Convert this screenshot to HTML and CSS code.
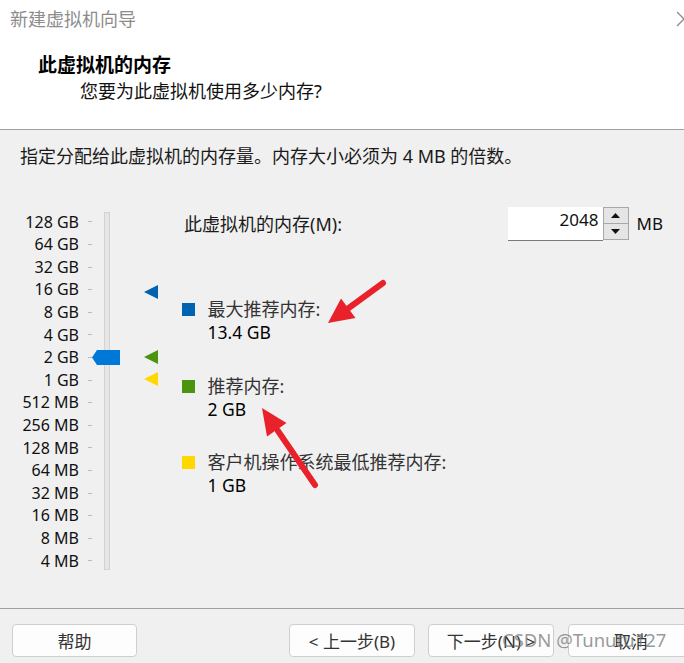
FILE: index.html
```html
<!DOCTYPE html>
<html lang="zh-CN">
<head>
<meta charset="utf-8">
<title>新建虚拟机向导</title>
<link rel="stylesheet" href="styles.css">
</head>
<body>
<div class="window">
  <div class="titlebar">
    <span class="title">新建虚拟机向导</span>
    <svg class="chev" width="10" height="36" viewBox="0 0 10 36"><polyline points="3,12 10,19 3,26" fill="none" stroke="#8a8a8a" stroke-width="1.3"/></svg>
  </div>
  <div class="header">
    <div class="h1">此虚拟机的内存</div>
    <div class="h2">您要为此虚拟机使用多少内存?</div>
  </div>
  <div class="content">
    <p class="desc">指定分配给此虚拟机的内存量。内存大小必须为 4 MB 的倍数。</p>
    <div class="main">
      <div class="slider">
        <div class="scale">
          <span class="lbl">128 GB</span><span class="tick"></span>
          <span class="lbl">64 GB</span><span class="tick"></span>
          <span class="lbl">32 GB</span><span class="tick"></span>
          <span class="lbl">16 GB</span><span class="tick"></span>
          <span class="lbl">8 GB</span><span class="tick"></span>
          <span class="lbl">4 GB</span><span class="tick"></span>
          <span class="lbl">2 GB</span><span class="tick"></span>
          <span class="lbl">1 GB</span><span class="tick"></span>
          <span class="lbl">512 MB</span><span class="tick"></span>
          <span class="lbl">256 MB</span><span class="tick"></span>
          <span class="lbl">128 MB</span><span class="tick"></span>
          <span class="lbl">64 MB</span><span class="tick"></span>
          <span class="lbl">32 MB</span><span class="tick"></span>
          <span class="lbl">16 MB</span><span class="tick"></span>
          <span class="lbl">8 MB</span><span class="tick"></span>
          <span class="lbl">4 MB</span><span class="tick"></span>
        </div>
        <div class="track"></div>
        <svg class="thumb" width="28" height="15" viewBox="0 0 28 15"><polygon points="5,0 28,0 28,15 5,15 0,7.5" fill="#0078d7"/></svg>
        <svg class="mk mk-max" width="14" height="14" viewBox="0 0 14 14"><polygon points="0,7 14,0 14,14" fill="#0063b1"/></svg>
        <svg class="mk mk-rec" width="14" height="14" viewBox="0 0 14 14"><polygon points="0,7 14,0 14,14" fill="#4a9410"/></svg>
        <svg class="mk mk-min" width="14" height="14" viewBox="0 0 14 14"><polygon points="0,7 14,0 14,14" fill="#ffd800"/></svg>
      </div>
      <div class="panel">
        <div class="memrow">
          <span class="memlbl">此虚拟机的内存(M):</span>
          <div class="spin">
            <div class="spin-input">2048</div>
            <div class="spin-btns">
              <div class="spin-btn up"><svg width="9" height="5" viewBox="0 0 9 5"><polygon points="0,5 9,5 4.5,0" fill="#111"/></svg></div>
              <div class="spin-btn"><svg width="9" height="5" viewBox="0 0 9 5"><polygon points="0,0 9,0 4.5,5" fill="#111"/></svg></div>
            </div>
          </div>
          <span class="unit">MB</span>
        </div>
        <div class="legend">
          <div class="item">
            <span class="sq sq-max"></span><span class="ilbl">最大推荐内存:</span>
            <span class="ival">13.4 GB</span>
          </div>
          <div class="item">
            <span class="sq sq-rec"></span><span class="ilbl">推荐内存:</span>
            <span class="ival">2 GB</span>
          </div>
          <div class="item">
            <span class="sq sq-min"></span><span class="ilbl">客户机操作系统最低推荐内存:</span>
            <span class="ival">1 GB</span>
          </div>
        </div>
      </div>
    </div>
  </div>
  <div class="footer">
    <div class="btn help">帮助</div>
    <div class="btn prev">&lt; 上一步(B)</div>
    <div class="btn next">下一步(N) &gt;</div>
    <div class="btn cancel">取消</div>
  </div>
  <svg class="arrows" width="684" height="663" viewBox="0 0 684 663">
    <line x1="383" y1="283" x2="346" y2="310" stroke="#e8212b" stroke-width="6" stroke-linecap="round"/>
    <polygon points="328,323 355.5,318 341,298.5" fill="#e8212b"/>
    <line x1="315" y1="485" x2="278" y2="431" stroke="#e8212b" stroke-width="6" stroke-linecap="round"/>
    <polygon points="262,408 286.5,423 267,436.5" fill="#e8212b"/>
  </svg>
  <div class="watermark">CSDN @Tunutu127</div>
</div>
</body>
</html>
```

FILE: styles.css
```css
* { box-sizing: border-box; }
html, body { margin: 0; padding: 0; }
body {
  width: 684px;
  height: 663px;
  overflow: hidden;
  background: #f0f0f0;
  color: #1a1a1a;
  font-family: "Noto Sans", "Noto Sans CJK SC", sans-serif;
}
.window {
  position: relative;
  height: 663px;
  display: flex;
  flex-direction: column;
}
.titlebar {
  height: 36px;
  flex-shrink: 0;
  background: #fff;
  display: flex;
  align-items: center;
  padding-left: 10px;
}
.title {
  font-family: "Noto Sans CJK SC", sans-serif;
  font-size: 18px;
  line-height: 24px;
  color: #8c8c8c;
}
.chev { margin-left: auto; display: block; }
.header {
  height: 94px;
  flex-shrink: 0;
  background: #fff;
  border-bottom: 1px solid #a0a0a0;
  padding-top: 16px;
}
.h1 {
  font-family: "Noto Sans CJK SC", sans-serif;
  font-weight: 700;
  font-size: 19px;
  line-height: 24px;
  padding-left: 38px;
  color: #000;
}
.h2 {
  font-size: 18px;
  line-height: 24px;
  margin-top: 3px;
  padding-left: 80px;
  color: #111;
}
.content {
  flex: 1;
  padding-top: 14px;
}
.desc {
  margin: 0;
  padding-left: 20px;
  font-size: 18px;
  line-height: 24px;
  color: #1a1a1a;
}
.main {
  display: flex;
  margin-top: 39px;
}
.slider {
  position: relative;
  width: 182px;
  flex-shrink: 0;
  display: flex;
  align-items: flex-start;
}
.scale {
  padding-top: 3.7px;
  display: grid;
  grid-template-columns: 79px 4px;
  column-gap: 9px;
  grid-auto-rows: 22.6px;
  align-items: center;
}
.lbl {
  text-align: right;
  font-size: 16px;
  line-height: 22.6px;
  white-space: nowrap;
  color: #111;
}
.tick {
  height: 1px;
  background: #b9b9b9;
}
.track {
  margin-left: 12px;
  margin-top: 5px;
  width: 6px;
  height: 358px;
  border: 1px solid #d2d2d2;
  background: #e6e6e6;
}
.thumb { position: absolute; left: 92px; top: 142.5px; }
.mk { position: absolute; left: 144px; }
.mk-max { top: 78px; }
.mk-rec { top: 142.5px; }
.mk-min { top: 165px; }
.panel {
  flex: 1;
  padding-right: 21px;
}
.memrow {
  display: flex;
  align-items: center;
  height: 34px;
}
.memlbl {
  margin-left: 2px;
  font-size: 18px;
  line-height: 24px;
  color: #1a1a1a;
}
.spin {
  margin-left: auto;
  display: flex;
  height: 34px;
}
.spin-input {
  width: 95px;
  height: 34px;
  background: #fff;
  border-bottom: 1px solid #7a7a7a;
  text-align: right;
  padding-right: 4px;
  font-size: 17px;
  line-height: 26px;
  color: #111;
}
.spin-btns {
  width: 26px;
  height: 33px;
  display: flex;
  flex-direction: column;
  border: 1px solid #a8a8a8;
  background: #e5e5e5;
}
.spin-btn {
  flex: 1;
  display: flex;
  align-items: center;
  justify-content: center;
}
.spin-btn svg { display: block; }
.spin-btn.up { border-bottom: 1px solid #a8a8a8; }
.unit {
  margin-left: 8px;
  font-size: 17px;
  line-height: 24px;
  color: #111;
}
.legend {
  margin-top: 57px;
  display: flex;
  flex-direction: column;
  gap: 30.5px;
}
.item {
  display: grid;
  grid-template-columns: 25.5px auto;
  grid-template-rows: 23px 23px;
  align-items: center;
}
.sq { width: 13px; height: 13px; }
.sq-max { background: #0063b1; }
.sq-rec { background: #4a9410; }
.sq-min { background: #ffd800; }
.ilbl {
  font-size: 18px;
  line-height: 23px;
  color: #333;
  white-space: nowrap;
}
.ival {
  grid-column: 2;
  font-size: 17.5px;
  line-height: 23px;
  color: #000;
}
.footer {
  height: 55px;
  flex-shrink: 0;
  border-top: 1px solid #a0a0a0;
  display: flex;
  padding: 15px 0 0 12px;
  overflow: hidden;
}
.btn {
  flex-shrink: 0;
  width: 126px;
  height: 33px;
  border: 1px solid #cfcfcf;
  border-radius: 4px;
  background: #fdfdfd;
  font-size: 17px;
  display: flex;
  align-items: center;
  justify-content: center;
  color: #333;
  white-space: nowrap;
}
.help { width: 125px; margin-right: 152px; }
.next { margin-left: 13px; }
.cancel { margin-left: 14px; }
.arrows {
  position: absolute;
  left: 0;
  top: 0;
  pointer-events: none;
}
.watermark {
  position: absolute;
  left: 502px;
  top: 627px;
  font-family: "Noto Sans", sans-serif;
  font-size: 18.5px;
  line-height: 26px;
  color: rgba(120, 120, 120, 0.75);
  white-space: nowrap;
  pointer-events: none;
}
```
